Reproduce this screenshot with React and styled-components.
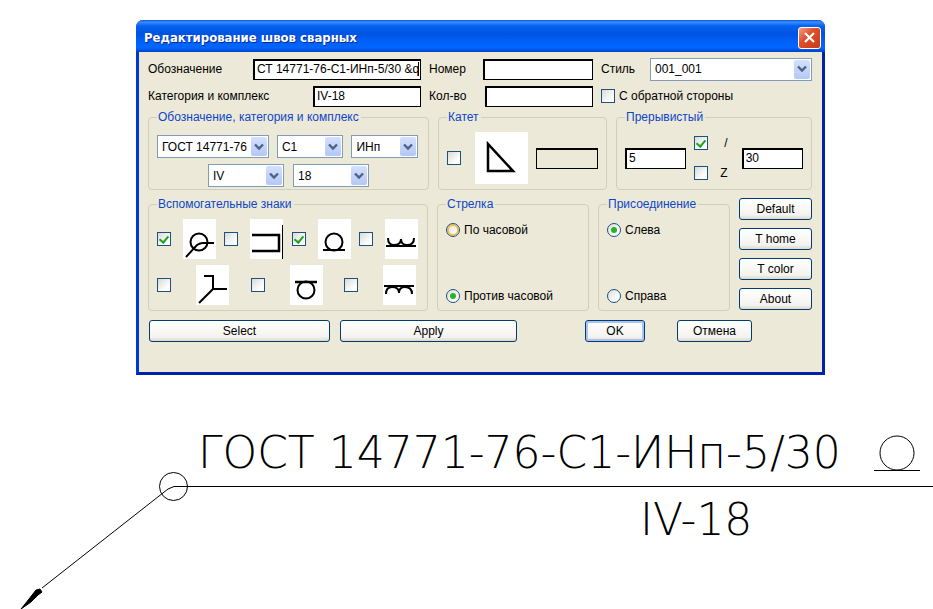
import React from "react";
import styled, { createGlobalStyle, css } from "styled-components";

const Global = createGlobalStyle`
  * { box-sizing: border-box; }
  body { margin: 0; background: #fff; overflow-x: hidden; }
  body, input, select, button { font: 12px/14px "Liberation Sans", Arial, sans-serif; color: #000; }
`;

const Page = styled.div`
  display: flex;
  flex-direction: column;
  gap: 52px;
  padding-top: 20px;
`;

const Dialog = styled.section`
  margin: 0 108px 0 136px;
  border: 3px solid #0038d4;
  border-top: 0;
  border-right-color: #0022a6;
  border-bottom-color: #0022a6;
  border-radius: 7px 7px 0 0;
  background: #ece9d8;
`;

const TitleBar = styled.header`
  display: flex;
  align-items: center;
  justify-content: space-between;
  height: 32px;
  margin: 0 -3px;
  padding: 3px 4px 0 8px;
  border-radius: 7px 7px 0 0;
  background: linear-gradient(#0a52d8 0, #3b8cff 2px, #0561ee 6px, #0053e1 14px, #0061fa 22px, #0066ff 28px, #0040c8 32px);
`;

const Title = styled.h1`
  margin: 0;
  font: bold 13px/16px "DejaVu Sans Condensed", "DejaVu Sans", sans-serif;
  color: #fff;
  text-shadow: 1px 1px #0a2a90;
`;

const CloseButton = styled.button`
  display: grid;
  place-items: center;
  width: 23px;
  height: 22px;
  padding: 0;
  border: 1px solid #fff;
  border-radius: 3px;
  background: linear-gradient(135deg, #f0a088, #e0502c 40%, #c83a10);
`;

const Body = styled.form`
  display: flex;
  flex-direction: column;
  padding: 6px 10px 30px 9px;
`;

const Fields = styled.div`
  display: grid;
  grid-template-columns: 273fr 164fr 211fr;
  grid-auto-rows: 22px;
  gap: 5px 8px;
  margin-bottom: 3px;
`;

const Field = styled.div`
  display: flex;
  align-items: center;
  justify-content: space-between;
`;

const InputBox = styled.span`
  display: grid;
  width: ${(p) => p.$w}px;
  & > * { grid-area: 1 / 1; }
`;

const TextInput = styled.input`
  width: ${(p) => (p.$w ? p.$w + "px" : "100%")};
  min-width: 0;
  height: 21px;
  padding: 0 2px 2px;
  border: 1px solid #000;
  border-width: ${(p) => (p.disabled ? "2px 1px 1px" : "2px 1px 1px 2px")};
  border-radius: 0;
  outline: 0;
  background: ${(p) => (p.disabled ? "transparent" : "#fff")};
`;

const Caret = styled.i`
  justify-self: end;
  align-self: center;
  width: 1px;
  height: 14px;
  margin-right: 2px;
  background: #000;
`;

const ComboWrap = styled.span`
  display: grid;
  flex: ${(p) => p.$grow || 0} 1 ${(p) => p.$w}px;
  min-width: 0;
  height: 23px;
  & > * { grid-area: 1 / 1; }
`;

const ComboSelect = styled.select`
  appearance: none;
  width: 100%;
  height: 23px;
  padding: 0 20px 0 4px;
  border: 1px solid #7f9db9;
  border-radius: 0;
  outline: 0;
  background: #fff;
`;

const ComboArrow = styled.span`
  display: grid;
  place-items: center;
  justify-self: end;
  width: 16px;
  height: 19px;
  margin: 2px;
  border-radius: 2px;
  background: linear-gradient(#d4e0fc, #b4c8f6);
  pointer-events: none;
`;

const Groups = styled.div`
  display: grid;
  grid-template-columns: ${(p) => p.$cols};
  gap: 9px;
  margin-bottom: ${(p) => p.$after}px;
`;

const Fieldset = styled.fieldset`
  min-width: 0;
  height: ${(p) => p.$h}px;
  margin: 0;
  padding: 0 8px;
  border: 1px solid #d0cfbb;
  border-radius: 4px;
`;

const Legend = styled.legend`
  margin: 0;
  padding: 0 2px 0 1px;
  line-height: 14px;
  white-space: nowrap;
  color: #0c46c8;
`;

const Stack = styled.div`
  display: flex;
  flex-direction: column;
  gap: ${(p) => p.$gap}px;
  padding: ${(p) => p.$top || 0}px ${(p) => p.$right || 0}px 0 0;
`;

const Line = styled.div`
  display: flex;
  align-items: center;
  justify-content: ${(p) => p.$justify || "flex-start"};
  gap: ${(p) => p.$gap || 0}px;
  padding-right: ${(p) => p.$right || 0}px;
`;

const boxShade = css`
  flex: none;
  appearance: none;
  width: 14px;
  height: 14px;
  margin: 0;
  border: 1px solid #1c5180;
`;

const Tick = styled.input.attrs({ type: "checkbox" })`
  ${boxShade}
  display: grid;
  place-items: center;
  background: linear-gradient(135deg, #d9d9d3, #fff 75%);
  &:checked::after {
    content: "";
    width: 4px;
    height: 7px;
    margin-top: -2px;
    border: solid #21a121;
    border-width: 0 2px 2px 0;
    transform: rotate(40deg);
  }
`;

const Radio = styled.input.attrs({ type: "radio" })`
  ${boxShade}
  display: grid;
  place-items: center;
  border-radius: 50%;
  background: linear-gradient(135deg, #dcdcd6, #fff 75%);
  ${(p) => p.$hot && css`box-shadow: inset 0 0 0 2px #f5bd52;`}
  &:checked::after {
    content: "";
    width: 6px;
    height: 6px;
    border-radius: 50%;
    background: #28b428;
  }
`;

const Choice = styled.label`
  display: flex;
  align-items: center;
  gap: ${(p) => p.$gap || 4}px;
  white-space: nowrap;
`;

const Picture = styled.svg`
  flex: none;
  display: block;
  background: #fff;
  fill: none;
  stroke: #000;
  stroke-width: 2;
`;

const PushButton = styled.button`
  flex: ${(p) => (p.$w ? `${p.$w} 1 ${p.$w}px` : "none")};
  height: 22px;
  padding: 0 4px;
  border: 1px solid #003c74;
  border-radius: 3px;
  background: linear-gradient(#fff, #f4f3ee 80%, #dcd8ca);
  ${(p) => p.$primary && css`box-shadow: inset 0 0 0 2px #a9c4f2;`}
`;

const Footer = styled.div`
  display: flex;
  gap: 10px;
  padding: 0 60px 0 1px;
`;

const Confirm = styled.div`
  display: flex;
  flex: 167 1 167px;
  gap: 32px;
  margin-left: 58px;
`;

const Annotation = styled.section`
  display: flex;
  align-items: flex-start;
`;

const Leader = styled.svg`
  flex: none;
  margin-top: 44px;
  fill: none;
  stroke: #000;
`;

const Designation = styled.div`
  flex: 1 0 0;
  min-width: 0;
`;

const Drafting = styled.p`
  display: flex;
  align-items: center;
  height: ${(p) => p.$h}px;
  margin: 0;
  padding: 0 0 ${(p) => (p.$ruled ? 7 : 0)}px ${(p) => p.$left}px;
  ${(p) => p.$ruled && css`border-bottom: 1px solid #000;`}
  font: 200 44px/48px "DejaVu Sans Light", "DejaVu Sans", sans-serif;
  white-space: nowrap;
`;

const SeamMark = styled.svg`
  flex: none;
  margin-left: 32px;
  fill: none;
  stroke: #000;
`;

function Combo({ value, w, grow, label, id }) {
  return (
    <ComboWrap $w={w} $grow={grow}>
      <ComboSelect id={id} aria-label={label} defaultValue={value}>
        <option>{value}</option>
      </ComboSelect>
      <ComboArrow>
        <svg width="10" height="8" viewBox="0 0 10 8" fill="none" stroke="#4d6185" strokeWidth="2.4">
          <path d="M1 1.5 5 5.5 9 1.5" />
        </svg>
      </ComboArrow>
    </ComboWrap>
  );
}

function Sign({ name, gap, checked, children, w = 33, h = 40 }) {
  return (
    <Choice $gap={gap}>
      <Tick aria-label={name} defaultChecked={checked} />
      <Picture width={w} height={h} viewBox={`0 0 ${w} ${h}`}>{children}</Picture>
    </Choice>
  );
}

export default function App() {
  return (
    <Page>
      <Global />
      <Dialog>
        <TitleBar>
          <Title>Редактирование швов сварных</Title>
          <CloseButton type="button" aria-label="Закрыть">
            <svg width="13" height="13" viewBox="0 0 13 13" stroke="#fff" strokeWidth="2.2">
              <path d="M2 2 11 11M11 2 2 11" />
            </svg>
          </CloseButton>
        </TitleBar>
        <Body onSubmit={(e) => e.preventDefault()}>
          <Fields>
            <Field>
              <label htmlFor="mark">Обозначение</label>
              <InputBox $w={168}>
                <TextInput id="mark" defaultValue="СТ 14771-76-С1-ИНп-5/30 &q" />
                <Caret />
              </InputBox>
            </Field>
            <Field>
              <label htmlFor="number">Номер</label>
              <TextInput id="number" $w={110} />
            </Field>
            <Field>
              <label htmlFor="style">Стиль</label>
              <Combo id="style" value="001_001" w={162} />
            </Field>
            <Field>
              <label htmlFor="category">Категория и комплекс</label>
              <TextInput id="category" $w={108} defaultValue="IV-18" />
            </Field>
            <Field>
              <label htmlFor="count">Кол-во</label>
              <TextInput id="count" $w={108} />
            </Field>
            <Choice><Tick />С обратной стороны</Choice>
          </Fields>

          <Groups $cols="281fr 169fr 196fr" $after={7}>
            <Fieldset $h={80}>
              <Legend>Обозначение, категория и комплекс</Legend>
              <Stack $gap={6} $top={11}>
                <Line $gap={8} $right={2}>
                  <Combo label="Стандарт" value="ГОСТ 14771-76" w={111} grow={111} />
                  <Combo label="Соединение" value="С1" w={66} grow={66} />
                  <Combo label="Способ" value="ИНп" w={66} grow={66} />
                </Line>
                <Line $gap={9} $justify="center">
                  <Combo label="Категория" value="IV" w={76} />
                  <Combo label="Комплекс" value="18" w={76} />
                </Line>
              </Stack>
            </Fieldset>
            <Fieldset $h={80}>
              <Legend>Катет</Legend>
              <Stack $gap={0} $top={8}>
                <Line $gap={8}>
                  <Sign name="Катет" gap={14} w={53} h={52}>
                    <path d="M13 12V39H38Z" strokeWidth="2.5" />
                  </Sign>
                  <TextInput aria-label="Размер катета" disabled />
                </Line>
              </Stack>
            </Fieldset>
            <Fieldset $h={80}>
              <Legend>Прерывистый</Legend>
              <Stack $gap={0} $top={12}>
                <Line $gap={8}>
                  <TextInput aria-label="Длина" defaultValue="5" />
                  <Stack $gap={16} $right={6}>
                    <Choice $gap={16}><Tick defaultChecked />/</Choice>
                    <Choice $gap={12}><Tick />Z</Choice>
                  </Stack>
                  <TextInput aria-label="Шаг" defaultValue="30" />
                </Line>
              </Stack>
            </Fieldset>
          </Groups>

          <Groups $cols="280fr 152fr 132fr 73fr" $after={9}>
            <Fieldset $h={114}>
              <Legend>Вспомогательные знаки</Legend>
              <Stack $gap={6} $top={8}>
                <Line $justify="space-between" $right={1}>
                  <Sign name="По замкнутой линии" gap={12} checked>
                    <circle cx="16" cy="23" r="8.5" />
                    <path d="M3 38 14 26Q17 24 20 24H31" />
                  </Sign>
                  <Sign name="По незамкнутой линии" gap={12}>
                    <path d="M2 16H29V32H2" strokeWidth="2.5" />
                    <path d="M32.5 6V40" strokeWidth="1" />
                  </Sign>
                  <Sign name="Снять усиление" gap={12} checked>
                    <circle cx="16" cy="23" r="8.5" />
                    <path d="M5 31H27" />
                  </Sign>
                  <Sign name="Плавный переход" gap={12}>
                    <path d="M1 27H31M3 19Q3 26 9 26 16 26 16 20 16 26 22 26 29 26 29 19" />
                  </Sign>
                </Line>
                <Line $justify="space-between" $right={3}>
                  <Sign name="Монтажный шов" gap={25}>
                    <path d="M8 11H17V24H31M17 24 3 38" />
                  </Sign>
                  <Sign name="Снять усиление снизу" gap={25}>
                    <path d="M5 17H27" strokeWidth="2.5" />
                    <circle cx="16" cy="25" r="8.5" />
                  </Sign>
                  <Sign name="Плавный переход снизу" gap={25}>
                    <path d="M1 21H31M3 29Q3 22 9 22 16 22 16 28 16 22 22 22 29 22 29 29" />
                  </Sign>
                </Line>
              </Stack>
            </Fieldset>
            <Fieldset $h={114}>
              <Legend>Стрелка</Legend>
              <Stack $gap={52} $top={12}>
                <Choice><Radio name="arrow" $hot />По часовой</Choice>
                <Choice><Radio name="arrow" defaultChecked />Против часовой</Choice>
              </Stack>
            </Fieldset>
            <Fieldset $h={114}>
              <Legend>Присоединение</Legend>
              <Stack $gap={52} $top={12}>
                <Choice><Radio name="side" defaultChecked />Слева</Choice>
                <Choice><Radio name="side" />Справа</Choice>
              </Stack>
            </Fieldset>
            <Stack $gap={8} $top={1}>
              <PushButton type="button">Default</PushButton>
              <PushButton type="button">T home</PushButton>
              <PushButton type="button">T color</PushButton>
              <PushButton type="button">About</PushButton>
            </Stack>
          </Groups>

          <Footer>
            <PushButton type="button" $w={181}>Select</PushButton>
            <PushButton type="button" $w={177}>Apply</PushButton>
            <Confirm>
              <PushButton $w={60} $primary>OK</PushButton>
              <PushButton type="button" $w={75}>Отмена</PushButton>
            </Confirm>
          </Footer>
        </Body>
      </Dialog>

      <Annotation>
        <Leader width="188" height="138" viewBox="0 0 188 138">
          <circle cx="173.5" cy="15.5" r="14" />
          <path d="M188 15.5H174L168 18 42 117" />
          <path d="M21 138 31 131 38 124 42 121 40 118 36 119 29 128Z" fill="#000" />
        </Leader>
        <Designation>
          <Drafting $h={60} $left={10} $ruled>
            ГОСТ 14771-76-С1-ИНп-5/30
            <SeamMark width="48" height="36" viewBox="0 0 48 36">
              <circle cx="24" cy="18" r="17" />
              <path d="M1 35.5H47" />
            </SeamMark>
          </Drafting>
          <Drafting $h={65} $left={452}>IV-18</Drafting>
        </Designation>
      </Annotation>
    </Page>
  );
}
